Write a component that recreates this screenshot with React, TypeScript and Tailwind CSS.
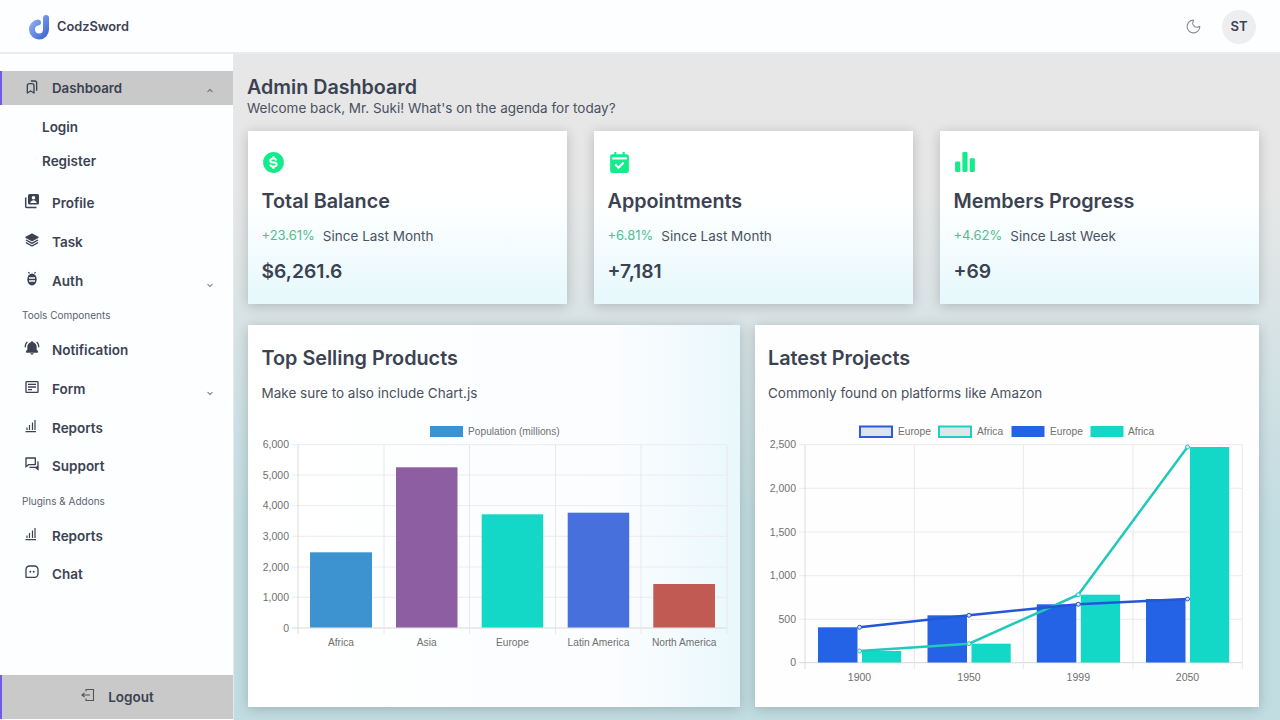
import React from 'react';
import { BiSolidBellRing, BiSolidLayer, BiSolidDollarCircle, BiSolidCalendarCheck, BiSolidBarChartAlt2, BiDetail, BiChevronDown, BiChevronUp, BiMessageSquareDots, BiConversation } from 'react-icons/bi';
import { TbBookmarks } from 'react-icons/tb';
import { Moon } from 'lucide-react';

const ReportsIcon = () => (
    <svg width="14" height="14" viewBox="0 0 14 14" fill="none" stroke="currentColor" strokeWidth="1.2">
        <path d="M3 8.500v2.500M5.500 6v5M8.500 3.500v7.500M11 1v10M1.500 12.700h10.500" />
    </svg>
);

const ProfileIcon = () => (
    <svg width="16" height="16" viewBox="0 0 16 16">
        <rect x="4" y="1" width="11" height="10.500" rx="1.500" fill="currentColor" />
        <circle cx="9.500" cy="4.700" r="1.800" fill="#fff" />
        <path d="M6.300 10c.3-2 1.700-2.800 3.200-2.800s2.900.8 3.200 2.800z" fill="#fff" />
        <path d="M1.700 4.500v9a1 1 0 0 0 1 1h9.800" fill="none" stroke="currentColor" strokeWidth="1.500" />
    </svg>
);

const BugIcon = () => (
    <svg width="16" height="16" viewBox="0 0 16 16">
        <ellipse cx="8" cy="8.500" rx="4.700" ry="6" fill="currentColor" />
        <path d="M5 7h6M5 10h6" stroke="#fff" strokeWidth="1.300" />
        <path d="M5.500 2.500 4.500 1M10.500 2.500l1-1.500" stroke="currentColor" strokeWidth="1.300" />
    </svg>
);

const LogoutIcon = () => (
    <svg width="14" height="14" viewBox="0 0 14 14" fill="none" stroke="#555" strokeWidth="1.100">
        <path d="M5 3.500V1.500h7.500v11H5v-2" />
        <path d="M9 7H1M3.500 5 1 7l2.500 2" />
    </svg>
);

const menuTop = [
    { label: 'Profile', icon: <ProfileIcon /> },
    { label: 'Task', icon: <BiSolidLayer size={16} /> },
    { label: 'Auth', icon: <BugIcon />, chevron: true },
];
const menuTools = [
    { label: 'Notification', icon: <BiSolidBellRing size={16} /> },
    { label: 'Form', icon: <BiDetail size={16} />, chevron: true },
    { label: 'Reports', icon: <ReportsIcon /> },
    { label: 'Support', icon: <BiConversation size={16} /> },
];
const menuPlugins = [
    { label: 'Reports', icon: <ReportsIcon /> },
    { label: 'Chat', icon: <BiMessageSquareDots size={16} /> },
];

const MenuRow = ({ item }: { item: { label: string; icon: React.ReactNode; chevron?: boolean } }) => (
    <div className="h-[38.75px] flex items-center pl-6 pr-[17px] text-[#3b4252]">
        <span className="w-7 flex -mt-1">{item.icon}</span>
        <span className="text-[13.5px] font-semibold flex-1">{item.label}</span>
        {item.chevron && <BiChevronDown size={12} className="text-[#777] mt-2" />}
    </div>
);

const Sidebar = () => (
    <aside className="w-[234px] shrink-0 bg-[#fdfeff] border-r border-[#e8e8e8] flex flex-col pt-[17px]">
        <div className="h-[34px] pt-px bg-[#c9c9c9] border-l-2 border-[#6d5ce8] flex items-center pl-[22px] pr-[17px] text-[#3b4252]">
            <TbBookmarks size={16} className="w-7 -mt-1 pr-3" />
            <span className="text-[13.3px] font-semibold flex-1">Dashboard</span>
            <BiChevronUp size={12} className="text-[#666] mt-1" />
        </div>
        <div className="mt-[5px] pl-[42px] text-[13.5px] font-semibold text-[#3b4252]">
            <div className="h-[34px] flex items-center">Login</div>
            <div className="h-[34px] flex items-center">Register</div>
        </div>
        <div className="mt-[6px]">
            {menuTop.map(m => <MenuRow key={m.label} item={m} />)}
        </div>
        <div className="h-[29.5px] pt-px pl-[22px] flex items-center text-[10px] text-[#5b6270]">Tools Components</div>
        <div className="mt-px">
            {menuTools.map(m => <MenuRow key={m.label} item={m} />)}
        </div>
        <div className="h-[29.5px] pt-px pl-[22px] flex items-center text-[10px] text-[#5b6270]">{'Plugins & Addons'}</div>
        <div className="mt-px">
            {menuPlugins.map(m => <MenuRow key={m.label} item={m} />)}
        </div>
        <div className="mt-auto mb-px h-[44px] bg-[#c9c9c9] border-l-2 border-[#6d5ce8] flex items-center justify-center gap-[13px] text-[#3b4252]">
            <span className="-mt-1 flex"><LogoutIcon /></span>
            <span className="text-[13.5px] font-semibold">Logout</span>
        </div>
    </aside>
);

const stats = [
    { title: 'Total Balance', pct: '+23.61%', since: 'Since Last Month', value: '$6,261.6', icon: <BiSolidDollarCircle size={25} /> },
    { title: 'Appointments', pct: '+6.81%', since: 'Since Last Month', value: '+7,181', icon: <BiSolidCalendarCheck size={25} /> },
    { title: 'Members Progress', pct: '+4.62%', since: 'Since Last Week', value: '+69', icon: <BiSolidBarChartAlt2 size={25} /> },
];

const StatCard = ({ s }: { s: (typeof stats)[number] }) => (
    <div className="h-[173px] bg-gradient-to-b from-white from-40% to-[#e6f8fc] shadow-[0_2px_12px_rgba(0,0,0,0.2)] pl-[13.5px] pt-[19px]">
        <div className="h-[25px] -ml-px text-[#14ec8c]">{s.icon}</div>
        <div className="mt-[11px] text-[19.8px] leading-[30px] font-semibold text-[#3b4252]">{s.title}</div>
        <div className="mt-[8px] h-[24px] flex items-center gap-2 text-[13.5px]">
            <span className="text-[13px] text-[#4fbf8f]">{s.pct}</span>
            <span className="text-[#4a5160]">{s.since}</span>
        </div>
        <div className="mt-[8px] text-[19.3px] leading-[30px] font-semibold text-[#3b4252]">{s.value}</div>
    </div>
);

const axisText = 'fill-[#707070] text-[10.5px]';
const labelText = 'fill-[#707070] text-[10.2px]';

const BarChart = () => {
    const rows = [[444.7, '6,000'], [475, '5,000'], [505.7, '4,000'], [536.300, '3,000'], [567, '2,000'], [597.300, '1,000'], [628, '0']] as const;
    const cols = [298, 384, 469.500, 555.500, 641, 727];
    const bars = [
        { x: 310, w: 62, top: 552.300, fill: '#3d93cf', name: 'Africa' },
        { x: 396, w: 61.500, top: 467.300, fill: '#8e5ea2', name: 'Asia' },
        { x: 481.700, w: 61.500, top: 514.300, fill: '#13d8c8', name: 'Europe' },
        { x: 567.700, w: 61.500, top: 512.700, fill: '#4770dc', name: 'Latin America' },
        { x: 653.300, w: 61.700, top: 584, fill: '#c05a52', name: 'North America' },
    ];
    return (
        <svg viewBox="248 420 492 235" width="492" height="235" className="block" style={{ fontFamily: '"Liberation Sans", Arial, sans-serif' }}>
            <rect x="430" y="426" width="33" height="11" fill="#3d93cf" />
            <text x="468" y="435" className={labelText}>Population (millions)</text>
            {rows.map(([y, t]) => (
                <g key={t}>
                    <line x1="292" x2="727" y1={y} y2={y} stroke={t === '0' ? '#d8d8d8' : '#ececee'} />
                    <text x="289" y={y + 3.500} textAnchor="end" className={axisText}>{t}</text>
                </g>
            ))}
            {cols.map(x => <line key={x} x1={x} x2={x} y1="444.700" y2="634" stroke={x === 298 ? '#dcdcdc' : '#e8e8ec'} />)}
            {bars.map(b => (
                <g key={b.name}>
                    <rect x={b.x} y={b.top} width={b.w} height={627.500 - b.top} fill={b.fill} />
                    <text x={b.x + b.w / 2} y="645.500" textAnchor="middle" className={labelText}>{b.name}</text>
                </g>
            ))}
        </svg>
    );
};

const MixedChart = () => {
    const rows = [[444.7, '2,500'], [488.300, '2,000'], [532, '1,500'], [575.700, '1,000'], [619.300, '500'], [662.700, '0']] as const;
    const cols = [805, 914.300, 1023.300, 1133, 1242.300];
    const groups = [
        { label: '1900', cx: 859.500, blue: 627.300, teal: 651 },
        { label: '1950', cx: 969, blue: 615.300, teal: 643.700 },
        { label: '1999', cx: 1078.300, blue: 604.300, teal: 594.700 },
        { label: '2050', cx: 1187.500, blue: 599, teal: 447 },
    ];
    return (
        <svg viewBox="755 420 504 270" width="504" height="270" className="block" style={{ fontFamily: '"Liberation Sans", Arial, sans-serif' }}>
            <rect x="860" y="426.500" width="32" height="10.500" fill="#dfe3f1" stroke="#2b5bd8" strokeWidth="2" />
            <text x="898" y="435" className={labelText}>Europe</text>
            <rect x="939" y="426.500" width="32" height="10.500" fill="#dce8e8" stroke="#1fd0c2" strokeWidth="2" />
            <text x="977" y="435" className={labelText}>Africa</text>
            <rect x="1011.500" y="426" width="33" height="11" fill="#2563e6" />
            <text x="1050" y="435" className={labelText}>Europe</text>
            <rect x="1090.500" y="426" width="33" height="11" fill="#13d8c8" />
            <text x="1128" y="435" className={labelText}>Africa</text>
            {rows.map(([y, t]) => (
                <g key={t}>
                    <line x1="799" x2="1242.300" y1={y} y2={y} stroke={t === '0' ? '#d8d8d8' : '#ececee'} />
                    <text x="796" y={y + 3.500} textAnchor="end" className={axisText}>{t}</text>
                </g>
            ))}
            {cols.map(x => <line key={x} x1={x} x2={x} y1="444.700" y2="669" stroke={x === 805 ? '#dcdcdc' : '#e8e8ec'} />)}
            {groups.map(g => (
                <g key={g.label}>
                    <rect x={g.cx - 41.500} y={g.blue} width="39.500" height={662.500 - g.blue} fill="#2563e6" />
                    <rect x={g.cx + 2.500} y={g.teal} width="39.200" height={662.500 - g.teal} fill="#13d8c8" />
                    <text x={g.cx} y="681" textAnchor="middle" className={axisText}>{g.label}</text>
                </g>
            ))}
            <polyline points={groups.map(g => `${g.cx},${g.teal}`).join(' ')} fill="none" stroke="#1fc9bb" strokeWidth="2.500" />
            <polyline points={groups.map(g => `${g.cx},${g.blue}`).join(' ')} fill="none" stroke="#2457d6" strokeWidth="2.500" />
            {groups.map(g => (
                <g key={g.label}>
                    <circle cx={g.cx} cy={g.teal} r="2" fill="#dcefee" stroke="#1fc9bb" />
                    <circle cx={g.cx} cy={g.blue} r="2" fill="#dfe3f1" stroke="#2457d6" />
                </g>
            ))}
        </svg>
    );
};

export default function App() {
    return (
        <div className="h-screen w-[1280px] overflow-hidden flex flex-col font-['Inter',sans-serif]">
            <header className="h-[54px] shrink-0 bg-[#fdfeff] border-b-2 border-[#ebebeb] flex items-center pl-[28px] pr-[24px] pt-[2px]">
                <svg width="22" height="25" viewBox="0 0 22 25">
                    <defs>
                        <linearGradient id="logoGrad" gradientUnits="userSpaceOnUse" x1="0" y1="6" x2="20" y2="22">
                            <stop offset="0" stopColor="#93b6f0" />
                            <stop offset="1" stopColor="#3c62d6" />
                        </linearGradient>
                    </defs>
                    <path d="M10 7.500A7 7 0 1 0 18 14.500V3" fill="none" stroke="url(#logoGrad)" strokeWidth="6" strokeLinecap="round" />
                </svg>
                <span className="ml-[7px] text-[12.8px] font-semibold text-[#3b4252]">CodzSword</span>
                <Moon size={17} strokeWidth={1.500} className="ml-auto -mt-[2px] text-[#8a8a8a]" />
                <div className="ml-[20px] w-[34px] h-[34px] rounded-full bg-[#eeeef0] flex items-center justify-center text-[13px] font-semibold text-[#3b4252]">ST</div>
            </header>
            <div className="flex flex-1 min-h-0">
                <Sidebar />
                <main className="flex-1 bg-gradient-to-b from-[#e7e7e7] from-20% to-[#c2dde2] to-70% pl-[14px] pr-[21px] pt-[20px]">
                    <h1 className="-ml-px text-[19.7px] leading-[26px] font-semibold text-[#3b4252]">Admin Dashboard</h1>
                    <p className="-ml-px -mt-px text-[13.5px] leading-[18px] text-[#4a5160]">{"Welcome back, Mr. Suki! What's on the agenda for today?"}</p>
                    <div className="mt-[14px] grid grid-cols-3 gap-[27px]">
                        {stats.map(s => <StatCard key={s.title} s={s} />)}
                    </div>
                    <div className="mt-[21px] grid grid-cols-[492px_504px] gap-[15px]">
                        <div className="h-[382px] bg-gradient-to-r from-white via-[#fbfdfe] via-75% to-[#e9f8fd] shadow-[0_2px_12px_rgba(0,0,0,0.2)]">
                            <div className="pl-[13.5px] pt-[18px] h-[95px]">
                                <div className="text-[19.8px] leading-[30px] font-semibold text-[#3b4252]">Top Selling Products</div>
                                <div className="mt-[10px] text-[13.5px] leading-[20px] text-[#4a5160]">Make sure to also include Chart.js</div>
                            </div>
                            <BarChart />
                        </div>
                        <div className="h-[382px] bg-[#fefefe] shadow-[0_2px_12px_rgba(0,0,0,0.2)]">
                            <div className="pl-[13px] pt-[18px] h-[95px]">
                                <div className="text-[19.8px] leading-[30px] font-semibold text-[#3b4252]">Latest Projects</div>
                                <div className="mt-[10px] text-[13.5px] leading-[20px] text-[#4a5160]">Commonly found on platforms like Amazon</div>
                            </div>
                            <MixedChart />
                        </div>
                    </div>
                </main>
            </div>
        </div>
    );
}
